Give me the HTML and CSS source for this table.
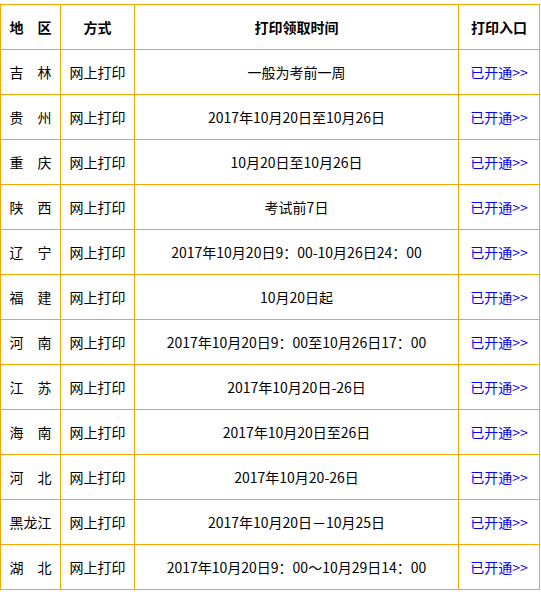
FILE: index.html
```html
<!DOCTYPE html>
<html>
<head>
<meta charset="utf-8">
<link rel="stylesheet" href="styles.css">
</head>
<body>
<table class="tbl">
<colgroup><col class="c1"><col class="c2"><col class="c3"><col class="c4"></colgroup>
<thead>
<tr><th>地　区</th><th>方式</th><th>打印领取时间</th><th>打印入口</th></tr>
</thead>
<tbody>
<tr><td>吉　林</td><td>网上打印</td><td>一般为考前一周</td><td><a class="lnk">已开通&gt;&gt;</a></td></tr>
<tr><td>贵　州</td><td>网上打印</td><td>2017年10月20日至10月26日</td><td><a class="lnk">已开通&gt;&gt;</a></td></tr>
<tr><td>重　庆</td><td>网上打印</td><td>10月20日至10月26日</td><td><a class="lnk">已开通&gt;&gt;</a></td></tr>
<tr><td>陕　西</td><td>网上打印</td><td>考试前7日</td><td><a class="lnk">已开通&gt;&gt;</a></td></tr>
<tr><td>辽　宁</td><td>网上打印</td><td>2017年10月20日9：00-10月26日24：00</td><td><a class="lnk">已开通&gt;&gt;</a></td></tr>
<tr><td>福　建</td><td>网上打印</td><td>10月20日起</td><td><a class="lnk">已开通&gt;&gt;</a></td></tr>
<tr><td>河　南</td><td>网上打印</td><td>2017年10月20日9：00至10月26日17：00</td><td><a class="lnk">已开通&gt;&gt;</a></td></tr>
<tr><td>江　苏</td><td>网上打印</td><td>2017年10月20日-26日</td><td><a class="lnk">已开通&gt;&gt;</a></td></tr>
<tr><td>海　南</td><td>网上打印</td><td>2017年10月20日至26日</td><td><a class="lnk">已开通&gt;&gt;</a></td></tr>
<tr><td>河　北</td><td>网上打印</td><td>2017年10月20-26日</td><td><a class="lnk">已开通&gt;&gt;</a></td></tr>
<tr><td>黑龙江</td><td>网上打印</td><td>2017年10月20日－10月25日</td><td><a class="lnk">已开通&gt;&gt;</a></td></tr>
<tr><td>湖　北</td><td>网上打印</td><td>2017年10月20日9：00～10月29日14：00</td><td><a class="lnk">已开通&gt;&gt;</a></td></tr>
</tbody>
</table>
</body>
</html>
```
FILE: styles.css
```css
html, body {
  margin: 0;
  padding: 0;
  background: #fff;
}
body {
  padding-top: 4px;
  font-family: "Noto Sans CJK SC", sans-serif;
  font-size: 14px;
  color: #000;
}
.tbl {
  border-collapse: collapse;
  table-layout: fixed;
  width: 540px;
}
.c1 { width: 60px; }
.c2 { width: 74px; }
.c3 { width: 324px; }
.c4 { width: 81px; }
.tbl th, .tbl td {
  border: 1px solid #ffa500;
  height: 44px;
  padding: 0;
  text-align: center;
  vertical-align: middle;
  line-height: 16px;
  white-space: nowrap;
}
.tbl th {
  font-weight: bold;
}
.lnk {
  color: #0000ff;
  text-decoration: none;
}
```
